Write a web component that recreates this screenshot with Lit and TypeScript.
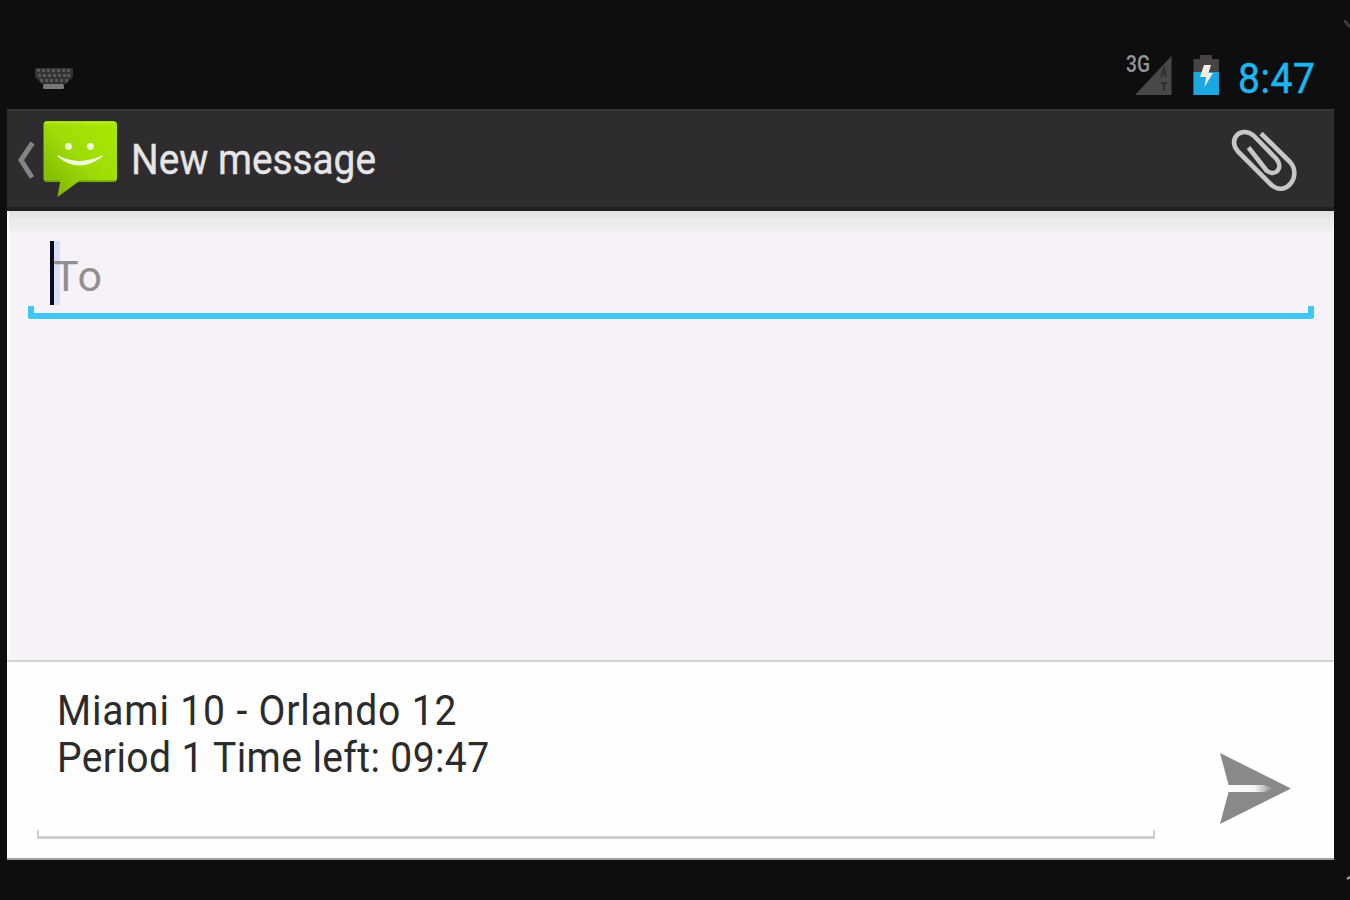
import { LitElement, html, svg, css } from 'lit';
import { customElement, property } from 'lit/decorators.js';

const KEY_ROWS = [
    { y: 69, xs: [37, 42, 47, 52, 57, 62, 67] },
    { y: 74, xs: [38, 43, 48, 53, 58, 63, 67] },
    { y: 79, xs: [40, 45, 50, 55, 60, 65] },
];

@customElement('status-bar')
export class StatusBar extends LitElement {

    public static override styles = css`
        :host {
            display: flex;
            align-items: flex-start;
            height: 109px;
            box-sizing: border-box;
            padding: 52px 19px 0 27px;
        }
        svg {
            display: block;
            flex: none;
        }
        .spacer {
            flex: 1;
        }
        .network {
            font-size: 24px;
            line-height: 24px;
            font-weight: 500;
            color: #969696;
            width: 9px;
            white-space: nowrap;
            transform: scaleX(0.8);
            transform-origin: 0 0;
        }
        .clock {
            width: 77px;
            font-size: 42px;
            line-height: 50px;
            margin-top: 2px;
            color: #1cb6f0;
            letter-spacing: 0.6px;
            white-space: nowrap;
            transform: scaleX(0.93);
            transform-origin: 0 0;
            -webkit-text-stroke: 0.5px #1cb6f0;
        }
    `;

    @property() network = '';
    @property() time = '';

    override render() {
        return html`
            <svg width="42" height="42" viewBox="34 52 42 42">
                <path d="M35 68H73V77L66 84H42L35 77Z" fill="#323333" />
                ${KEY_ROWS.map((row) => row.xs.map((x) => svg`
                    <rect x=${x} y=${row.y} width="3" height="3" fill="#565757" />
                `))}
                <rect x="43" y="84" width="21" height="5" rx="1.5" fill="#777878" />
            </svg>
            <div class="spacer"></div>
            <div class="network">${this.network}</div>
            <svg width="38" height="46" viewBox="1135 52 38 46">
                <path d="M1171.5 56V95H1135Z" fill="#484848" />
                <path d="M1161 77L1164 69L1166 77M1161 83H1167M1164 83V91" fill="none" stroke="#303030" stroke-width="2.2" />
            </svg>
            <svg width="65" height="46" viewBox="1173 52 65 46">
                <path d="M1200 55H1212V59H1219V95H1193.500V59H1200Z" fill="#474343" />
                <path d="M1193.500 72H1219V95H1193.500Z" fill="#1ba7df" />
                <path d="M1204 65H1211L1208.500 73H1213L1204.500 87L1206 77H1200Z" fill="#f0ece8" />
            </svg>
            <div class="clock">${this.time}</div>
        `;
    }
}

@customElement('action-bar')
export class ActionBar extends LitElement {

    public static override styles = css`
        :host {
            display: flex;
            align-items: flex-start;
            height: 102px;
            box-sizing: border-box;
            background: #2f2c2f;
            border-top: 2px solid #373537;
            border-bottom: 4px solid #1c221b;
        }
        svg {
            display: block;
            flex: none;
        }
        .title {
            flex: 1;
            font-size: 42px;
            line-height: 50px;
            margin: 24px 0 0 12px;
            color: #e6e6e6;
            -webkit-text-stroke: 0.4px #e6e6e6;
            white-space: nowrap;
            transform: scaleX(0.923);
            transform-origin: 0 0;
        }
    `;

    @property() override title = '';

    override render() {
        return html`
            <svg width="112" height="96" viewBox="7 111 112 96">
                <defs>
                    <linearGradient id="bubble" x1="1" y1="0" x2="0" y2="1">
                        <stop offset="0" stop-color="#a9ea00" />
                        <stop offset="0.5" stop-color="#9edb08" />
                        <stop offset="1" stop-color="#78b000" />
                    </linearGradient>
                </defs>
                <path d="M32.500 143L21 160L32 177.500" fill="none" stroke="#858385" stroke-width="5" />
                <path d="M47 121H113Q117 121 117 125V178Q117 182 113 182H78L57.500 197L60 182H47Q43.500 182 43.500 178V125Q43.500 121 47 121Z" fill="url(#bubble)" />
                <path d="M45 123H115" stroke="#c0ef45" stroke-width="2" opacity="0.5" />
                <path d="M45 181H60M79 181H115" stroke="#6a9800" stroke-width="2" opacity="0.6" />
                <circle cx="68.500" cy="146.500" r="3.400" fill="#f0fad2" />
                <circle cx="90.500" cy="146.500" r="3.400" fill="#f0fad2" />
                <path d="M58 156Q79 174 102 156Q79 167 58 156Z" fill="#f4fbdc" stroke="#f4fbdc" stroke-width="1.200" stroke-linejoin="round" />
            </svg>
            <div class="title">${this.title}</div>
            <svg width="104" height="96" viewBox="1230 111 104 96">
                <path
                    d="M1261 133.500L1290 162C1302 175 1287 197 1272 185.500L1238 151.500C1227 139 1241 125.500 1253.500 135.500L1276.500 159C1284 168 1275 177.500 1266.500 170.500L1248.500 147.500"
                    fill="none" stroke="#c8c7c8" stroke-width="4.600" stroke-linecap="butt" stroke-linejoin="round"
                />
            </svg>
        `;
    }
}

@customElement('recipient-field')
export class RecipientField extends LitElement {

    public static override styles = css`
        :host {
            display: block;
            height: 449px;
            box-sizing: border-box;
            padding: 30px 20px 0 19px;
            border-left: 2px solid #fdfcfd;
            background: linear-gradient(#e0dfe0 0, #ebe9eb 8px, #f0eef0 19px, #f6f2f8 22px);
        }
        .input {
            display: flex;
            height: 65px;
            padding-left: 22px;
        }
        .cursor {
            width: 4px;
            height: 64px;
            background: #0b0b1c;
        }
        .hint {
            font-size: 43px;
            line-height: 50px;
            margin: 10px 0 0 -1px;
            color: #919091;
            letter-spacing: 1px;
        }
        .highlight {
            width: 6px;
            height: 64px;
            margin-right: -6px;
            background: #d6dff8;
        }
        .underline {
            height: 13px;
            box-sizing: border-box;
            border: 6px solid #3fc8f4;
            border-top: 0;
            border-radius: 0 0 3px 3px;
        }
    `;

    @property() hint = '';

    override render() {
        return html`
            <div class="input">
                <div class="cursor"></div>
                <div class="highlight"></div>
                <div class="hint">${this.hint}</div>
            </div>
            <div class="underline"></div>
        `;
    }
}

@customElement('message-composer')
export class MessageComposer extends LitElement {

    public static override styles = css`
        :host {
            display: flex;
            height: 200px;
            box-sizing: border-box;
            border-top: 2px solid #d4d3d4;
            border-bottom: 2px solid #a0a0a0;
            background: #fefefe;
        }
        .editor {
            width: 1118px;
            margin-left: 30px;
        }
        .text {
            height: 143px;
            padding: 25px 0 0 20px;
            box-sizing: content-box;
            font-size: 42px;
            line-height: 47px;
            color: #2b2b2b;
            white-space: pre;
        }
        .line {
            display: block;
            letter-spacing: 0.4px;
            transform: scaleX(0.93);
            transform-origin: 0 0;
        }
        .line:first-child {
            letter-spacing: 0.9px;
        }
        .underline {
            height: 9px;
            box-sizing: border-box;
            border: 2px solid #d0d0d0;
            border-top: 0;
            border-bottom-width: 3px;
        }
        svg {
            display: block;
            margin: 89px 0 0 64px;
        }
    `;

    @property({ attribute: false }) lines: string[] = [];

    override render() {
        return html`
            <div class="editor">
                <div class="text">${this.lines.map((line) => html`<span class="line">${line}</span>`)}</div>
                <div class="underline"></div>
            </div>
            <svg width="73" height="74" viewBox="1219 751 73 74">
                <defs>
                    <linearGradient id="slot">
                        <stop offset="0" stop-color="#fefefe" />
                        <stop offset="0.6" stop-color="#f4f4f4" />
                        <stop offset="1" stop-color="#898989" />
                    </linearGradient>
                </defs>
                <path d="M1220 753L1291 788.500L1220 824L1229.500 788.500Z" fill="#898989" />
                <path d="M1227 785H1264L1274 788L1264 792H1227Z" fill="url(#slot)" />
            </svg>
        `;
    }
}

@customElement('app-root')
export class AppRoot extends LitElement {

    public static override styles = css`
        :host {
            display: block;
            position: relative;
            width: 1350px;
            height: 900px;
            overflow: hidden;
            background: #0e0e0e;
            font-family: Roboto, "Liberation Sans", sans-serif;
        }
        .screen {
            width: 1327px;
            margin-left: 7px;
        }
        .corner {
            position: absolute;
            right: 0;
            width: 6px;
            height: 8px;
        }
        .corner.top {
            top: 20px;
        }
        .corner.bottom {
            top: 874px;
        }
    `;

    override render() {
        return html`
            <div class="screen">
                <status-bar network="3G" time="8:47"></status-bar>
                <action-bar title="New message"></action-bar>
                <recipient-field hint="To"></recipient-field>
                <message-composer
                    .lines=${['Miami 10 - Orlando 12', 'Period 1 Time left: 09:47']}
                ></message-composer>
            </div>
            <svg class="corner top" viewBox="0 0 6 8"><path d="M0 0L6 7" stroke="#3c3c3c" stroke-width="3" /></svg>
            <svg class="corner bottom" viewBox="0 0 6 8"><path d="M3 5L6 3" stroke="#9a9a9a" stroke-width="2.5" /></svg>
        `;
    }
}
